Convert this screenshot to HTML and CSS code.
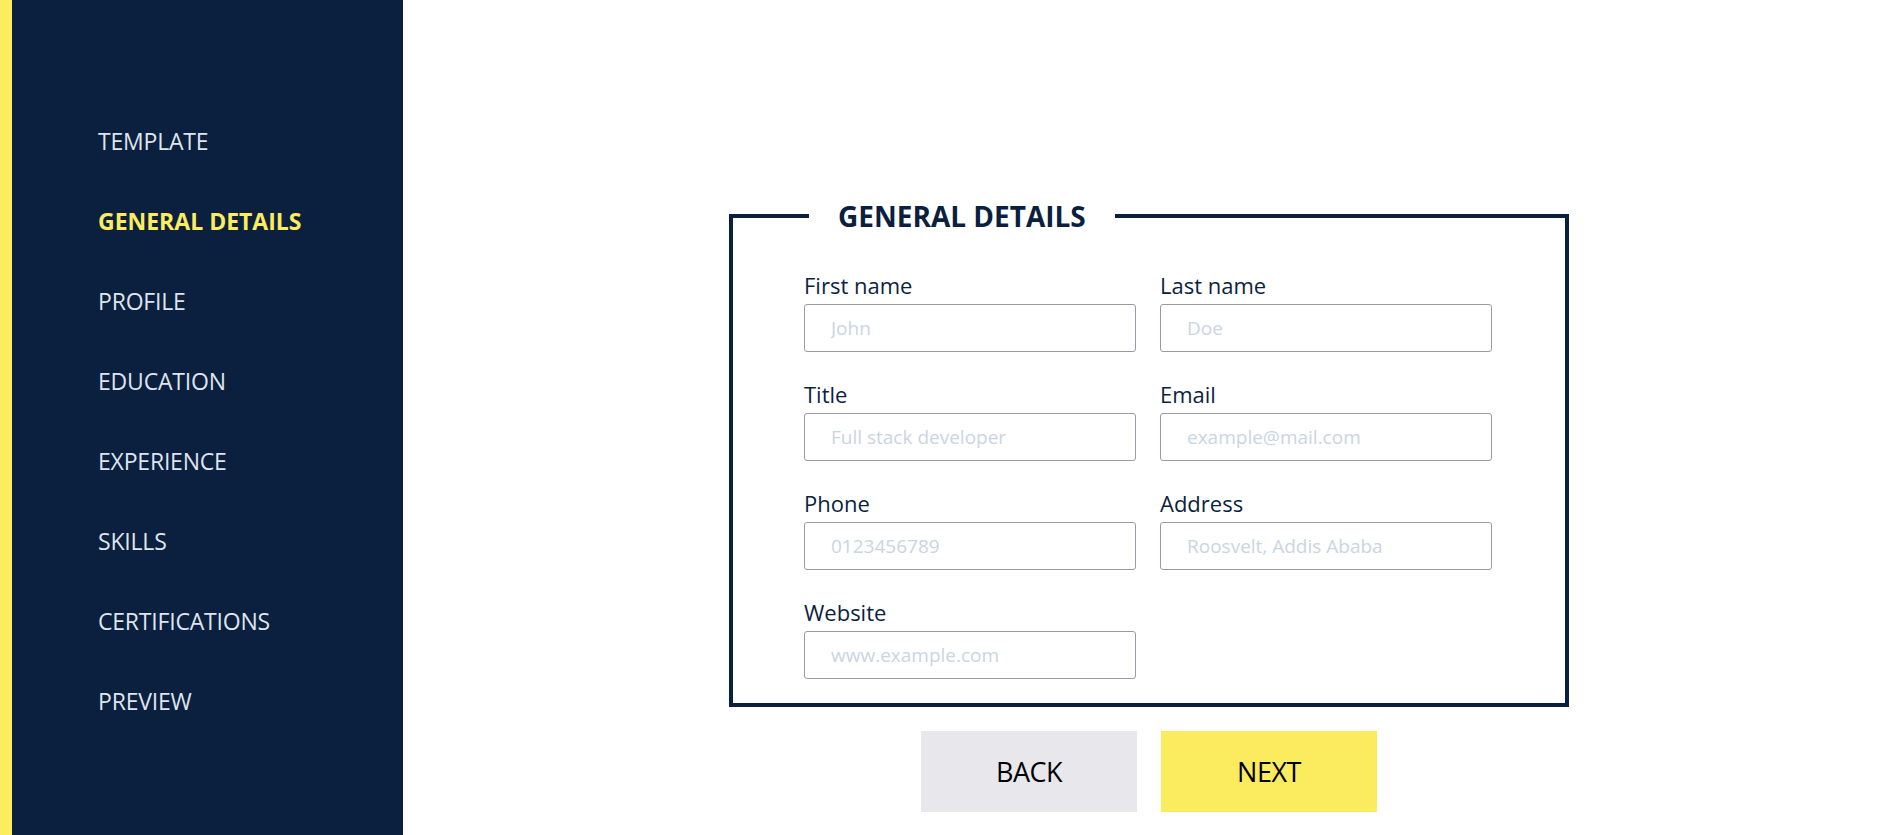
FILE: index.html
```html
<!DOCTYPE html>
<html lang="en">
<head>
<meta charset="utf-8">
<title>Resume builder - General details</title>
<link rel="stylesheet" href="styles.css">
</head>
<body>
<div class="app">
  <aside class="sidebar">
    <nav>
      <ul class="nav">
        <li><a class="nav-link" href="#">TEMPLATE</a></li>
        <li><a class="nav-link active" href="#">GENERAL DETAILS</a></li>
        <li><a class="nav-link" href="#">PROFILE</a></li>
        <li><a class="nav-link" href="#">EDUCATION</a></li>
        <li><a class="nav-link" href="#">EXPERIENCE</a></li>
        <li><a class="nav-link" href="#">SKILLS</a></li>
        <li><a class="nav-link" href="#">CERTIFICATIONS</a></li>
        <li><a class="nav-link" href="#">PREVIEW</a></li>
      </ul>
    </nav>
  </aside>
  <main class="main">
    <form class="form">
      <fieldset class="card">
        <legend class="card-title">GENERAL DETAILS</legend>
        <div class="grid">
          <label class="field"><span class="field-label">First name</span><input class="input" placeholder="John"></label>
          <label class="field"><span class="field-label">Last name</span><input class="input" placeholder="Doe"></label>
          <label class="field"><span class="field-label">Title</span><input class="input" placeholder="Full stack developer"></label>
          <label class="field"><span class="field-label">Email</span><input class="input" placeholder="example@mail.com"></label>
          <label class="field"><span class="field-label">Phone</span><input class="input" placeholder="0123456789"></label>
          <label class="field"><span class="field-label">Address</span><input class="input" placeholder="Roosvelt, Addis Ababa"></label>
          <label class="field"><span class="field-label">Website</span><input class="input" placeholder="www.example.com"></label>
        </div>
      </fieldset>
      <div class="actions">
        <button type="button" class="btn btn-back">BACK</button>
        <button type="button" class="btn btn-next">NEXT</button>
      </div>
    </form>
  </main>
</div>
</body>
</html>
```

FILE: styles.css
```css
* { box-sizing: border-box; }

html, body {
  margin: 0;
  padding: 0;
  height: 100%;
}

body {
  font-family: "Open Sans", "Noto Sans", sans-serif;
  background: #ffffff;
  color: #0b1f3e;
  overflow: hidden;
}

.app {
  display: flex;
  height: 835px;
}

.sidebar {
  flex: 0 0 403px;
  background: #0b1f3e;
  border-left: 12px solid #fcec5e;
  padding: 101px 0 0 86px;
}

.nav {
  list-style: none;
  margin: 0;
  padding: 0;
}

.nav-link {
  display: block;
  padding: 24px 0;
  line-height: 32px;
  font-size: 23px;
  color: #dfe4ee;
  text-decoration: none;
  letter-spacing: -0.2px;
}

.nav-link.active {
  color: #fcec5e;
  font-weight: 700;
  letter-spacing: 0;
}

.main {
  flex: 1;
  display: flex;
  justify-content: center;
  padding: 198px 0 0 8px;
}

.form {
  display: flex;
  flex-direction: column;
  align-items: center;
  width: 840px;
}

.card {
  width: 840px;
  margin: 0;
  border: 4px solid #0b1f3e;
  padding: 36px 72px 24px 71px;
  min-width: 0;
}

.card-title {
  margin-left: 5px;
  padding: 0 29px;
  font-size: 28px;
  line-height: 36px;
  font-weight: 700;
  color: #0b1f3e;
}

.grid {
  display: grid;
  grid-template-columns: 332px 332px;
  column-gap: 24px;
  row-gap: 27px;
}

.field {
  display: flex;
  flex-direction: column;
}

.field-label {
  font-size: 22px;
  line-height: 30px;
  margin-bottom: 4px;
  color: #0b1f3e;
}

.input {
  height: 48px;
  width: 332px;
  border: 1px solid #9b9aab;
  border-radius: 3px;
  padding: 0 0 0 26px;
  font-family: inherit;
  font-size: 19px;
  color: #0b1f3e;
  background: #ffffff;
}

.input::placeholder {
  color: #cad5e2;
}

.actions {
  display: flex;
  gap: 24px;
  margin-top: 24px;
}

.btn {
  width: 216px;
  height: 81px;
  border: none;
  font-family: inherit;
  font-size: 27px;
  color: #000000;
  cursor: pointer;
  letter-spacing: -0.5px;
}

.btn-back {
  background: #e8e7ec;
}

.btn-next {
  background: #fbeb5f;
}
```
